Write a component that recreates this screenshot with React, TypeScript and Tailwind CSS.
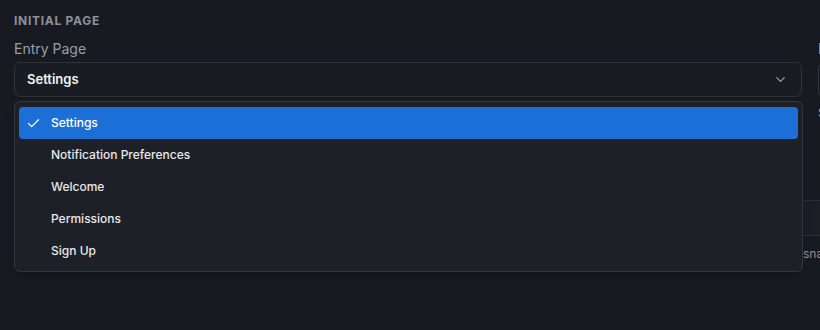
import { Check, ChevronDown } from 'lucide-react';

const pages = ['Settings', 'Notification Preferences', 'Welcome', 'Permissions', 'Sign Up'];

export default function App() {
  return (
    <div className="relative h-[330px] w-[820px] overflow-hidden bg-[#181a21] font-['Inter',sans-serif] text-white">
      <div className="grid grid-cols-[788px_788px] gap-x-[16px] px-[14px] pt-[13px]">
        {/* Initial page */}
        <div>
          <div className="text-[12px] font-bold uppercase leading-[16px] tracking-[0.06em] text-[#8d919b]">Initial Page</div>
          <div className="mt-[10px] text-[14px] leading-[20px] text-[#9a9ea8]">Entry Page</div>
          <div className="mt-[3px] flex h-[35px] items-center justify-between rounded-[6px] border border-[#2f323a] bg-[#1a1c23] pl-[12px] pr-[13px]">
            <span className="text-[13px] font-semibold text-[#f2f3f5]">Settings</span>
            <ChevronDown className="h-[15px] w-[15px] text-[#9a9ea8]" strokeWidth={2} />
          </div>
        </div>

        {/* Exit page (partly off screen) */}
        <div>
          <div className="text-[12px] leading-[16px]">&nbsp;</div>
          <div className="mt-[10px] text-[14px] leading-[20px] text-[#9a9ea8]">Exit Page</div>
          <div className="mt-[3px] flex h-[35px] items-center rounded-[6px] border border-[#2f323a] bg-[#1a1c23] px-[12px]" />
          <div className="mt-[8px] text-[12px] leading-[16px] text-[#9a9ea8]">Shown after sign out</div>
        </div>
      </div>

      {/* Lower section, mostly hidden behind the menu */}
      <div className="mt-[79px] grid grid-cols-[773px_1fr] gap-x-[16px] px-[14px]">
        <div className="col-span-2 h-[36px] border-y border-[#2b2e36] bg-[#1c1e26]" />
        <div />
        <div className="mt-[10px] whitespace-nowrap text-[12px] leading-[16px] text-[#8a8e98]">snapshot rules</div>
      </div>

      {/* Open menu */}
      <div className="absolute left-[14px] top-[101px] w-[789px] rounded-[6px] border border-[#33363e] bg-[#1e2028] px-[4px] pb-[4px] pt-[5px] shadow-lg">
        {pages.map((p, i) => (
          <div
            key={p}
            className={`flex h-[32px] items-center gap-[12px] rounded-[4px] pl-[8px] text-[12px] font-medium ${
              i === 0 ? 'bg-[#1b6fd6] text-white' : 'text-[#e8e9ec]'
            }`}
          >
            <span className="flex w-[12px] justify-center">
              {i === 0 && <Check className="h-[15px] w-[15px] shrink-0" strokeWidth={2} />}
            </span>
            <span>{p}</span>
          </div>
        ))}
      </div>
    </div>
  );
}
